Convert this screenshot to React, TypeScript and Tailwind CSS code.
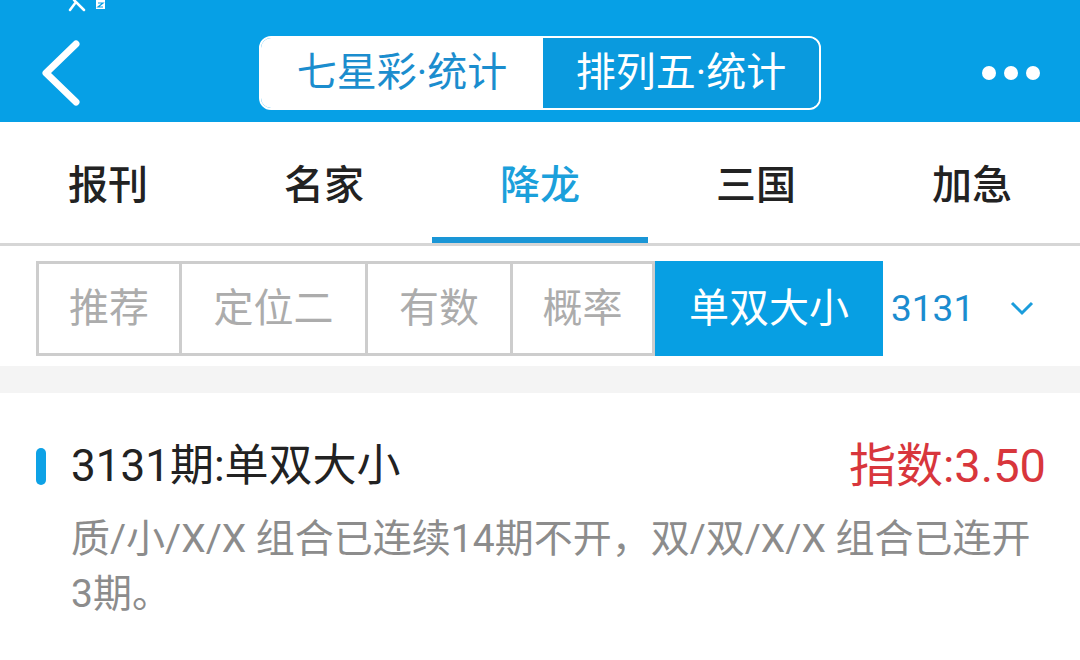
import React from "react";

const font = { fontFamily: 'Roboto, "Noto Sans CJK SC", sans-serif' };

const tabs = ["报刊", "名家", "降龙", "三国", "加急"];
const subTabs = [
  { label: "推荐", w: "w-[143px]" },
  { label: "定位二", w: "w-[186px]" },
  { label: "有数", w: "w-[145px]" },
  { label: "概率", w: "w-[142px]" },
];

const App: React.FC = () => {
  return (
    <div className="w-[1080px] h-[660px] overflow-hidden bg-white" style={font}>
      {/* header */}
      <header className="h-[122px] bg-[#06a0e6] relative">
        <svg width="44" height="12" viewBox="0 0 44 12" className="absolute left-[66px] top-0">
          <path d="M4 10 L10 2 M8 0 L18 10" stroke="white" strokeWidth="2.5" strokeLinecap="round" />
          <rect x="30" y="0" width="9" height="9" fill="white" />
          <path d="M32 3 H37 L32 7 H37" stroke="#06a0e6" strokeWidth="1.2" fill="none" />
        </svg>
        <div className="h-full flex items-center pt-[24px] px-[38px]">
          <svg width="46" height="66" viewBox="0 0 46 66" className="shrink-0">
            <path d="M38 4 L8 33 L38 62" fill="none" stroke="white" strokeWidth="7" strokeLinecap="round" strokeLinejoin="round" />
          </svg>
          <div className="flex-1 flex justify-center">
            <div className="ml-[14px] flex h-[74px] w-[562px] rounded-[12px] border-[2px] border-white overflow-hidden">
              <div className="w-[282px] bg-white flex items-center justify-center text-[40px] text-[#1b8dce]">
                七星彩·统计
              </div>
              <div className="flex-1 bg-[#0a9ade] flex items-center justify-center text-[40px] text-white">
                排列五·统计
              </div>
            </div>
          </div>
          <div className="flex gap-[8px] mr-[2px]">
            <span className="w-[14px] h-[14px] rounded-full bg-white" />
            <span className="w-[14px] h-[14px] rounded-full bg-white" />
            <span className="w-[14px] h-[14px] rounded-full bg-white" />
          </div>
        </div>
      </header>

      {/* main tabs */}
      <nav className="h-[124px] flex border-b-[3px] border-[#d6d6d6]">
        {tabs.map((t, i) => (
          <div key={t} className="flex-1 flex flex-col">
            <div
              className={`flex-1 flex items-center justify-center pt-[12px] text-[40px] font-medium ${
                i === 2 ? "text-[#1ba0db]" : "text-[#222]"
              }`}
            >
              {t}
            </div>
            <div className={`h-[6px] ${i === 2 ? "bg-[#1a96d6]" : ""}`} />
          </div>
        ))}
      </nav>

      {/* sub tabs */}
      <div className="flex items-center pl-[36px] pt-[15px]">
        <div className="flex h-[95px] border-[3px] border-r-0 border-[#cdcdcd]">
          {subTabs.map((s) => (
            <div
              key={s.label}
              className={`${s.w} flex items-center justify-center text-[40px] text-[#acacac] border-r-[3px] border-[#cdcdcd]`}
            >
              {s.label}
            </div>
          ))}
          <div className="w-[228px] -my-[3px] bg-[#079fe3] flex items-center justify-center text-[40px] text-white">
            单双大小
          </div>
        </div>
        <div className="flex items-center ml-[8px] text-[37px] text-[#1b8ccf]">
          <span>3131</span>
          <svg width="24" height="15" viewBox="0 0 24 15" className="ml-[36px]">
            <path d="M2 2 L12 12 L22 2" fill="none" stroke="#1b9ddc" strokeWidth="3" />
          </svg>
        </div>
      </div>

      <div className="h-[27px] bg-[#f4f4f4] mt-[10px]" />

      {/* card */}
      <section className="pt-[49px] pl-[36px] pr-[34px]">
        <div className="h-[48px] flex items-center justify-between">
          <div className="flex items-center">
            <span className="w-[10px] h-[37px] rounded-full bg-[#0ea2e6]" />
            <span className="ml-[25px] text-[44px] text-[#222]">3131期:单双大小</span>
          </div>
          <span className="text-[47px] text-[#d8363c]">指数:3.50</span>
        </div>
        <p className="mt-[22px] ml-[35px] text-[39px] leading-[55px] text-[#8c8c8c]">
          质/小/X/X 组合已连续14期不开，双/双/X/X 组合已连开<span className="whitespace-nowrap">3期。</span>
        </p>
      </section>
    </div>
  );
};

export default App;
